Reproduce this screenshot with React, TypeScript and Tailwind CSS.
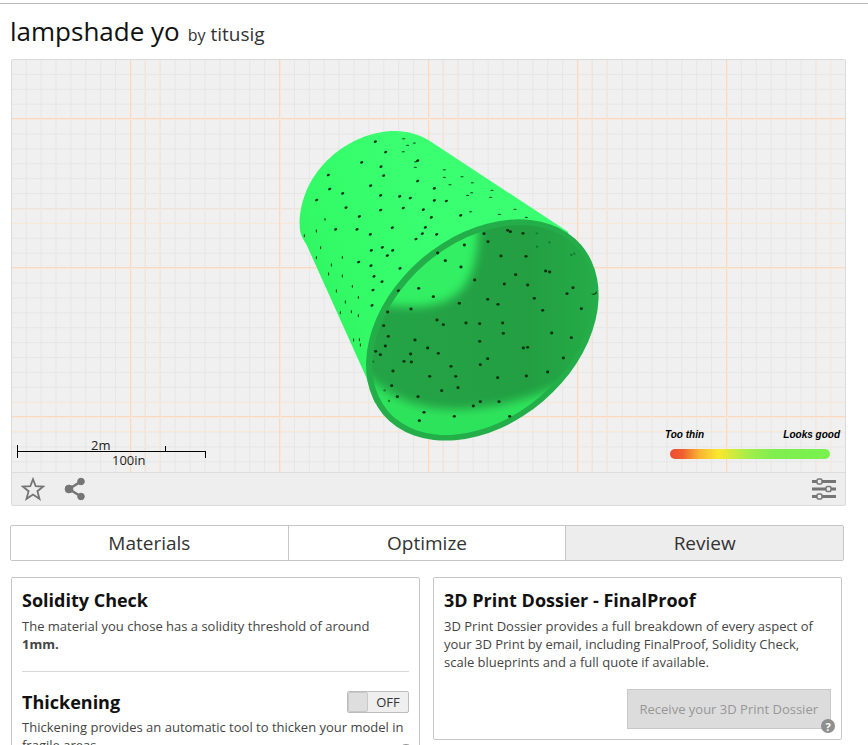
import { useState, type ReactNode } from 'react'

type TabKey = 'materials' | 'optimize' | 'review'

const TABS: { key: TabKey; label: string }[] = [
  { key: 'materials', label: 'Materials' },
  { key: 'optimize', label: 'Optimize' },
  { key: 'review', label: 'Review' },
]

type Point = [number, number]

// marks on the outer wall
const OUTER_MARKS: Point[] = [
  [271, 65], [302, 96], [230, 127], [288, 140], [296, 167], [130, 165], [134, 207], [173, 220],
  [257, 197], [287, 226], [344, 229], [376, 234], [355, 264], [95, 240], [183, 263], [223, 289],
  [287, 270], [322, 323], [152, 328], [216, 328], [256, 343], [259, 391], [292, 382], [323, 391],
  [307, 407], [398, 183], [398, 122], [415, 269], [439, 292], [421, 322], [412, 341], [393, 357],
  [455, 343], [448, 205], [448, 241], [484, 243], [221, 426], [258, 437], [267, 469], [291, 485],
  [345, 445], [264, 510], [261, 556], [340, 512], [527, 286],
]

// foreshortened marks along the top edge
const FLAT_MARKS: Point[] = [
  [356, 56], [368, 76], [388, 69], [355, 95], [391, 142], [392, 125], [478, 149], [478, 172],
  [495, 194], [531, 170], [562, 188], [560, 218], [548, 226], [621, 211], [617, 232], [557, 275],
  [643, 283], [690, 268], [724, 292],
]

// foreshortened marks along the left edge
const TALL_MARKS: Point[] = [
  [120, 298], [94, 333], [107, 383], [94, 413], [139, 435], [131, 462], [172, 412], [172, 468],
  [154, 513], [202, 499], [220, 532], [181, 546], [166, 578], [199, 575], [220, 587], [206, 660],
  [223, 659], [226, 675], [58, 347],
]

const INNER_MARKS: Point[] = [
  [597, 341], [609, 365], [538, 375], [458, 399], [481, 422], [528, 441], [569, 480], [401, 505],
  [445, 530], [378, 567], [523, 550], [456, 600], [475, 614], [648, 408], [723, 409], [692, 464],
  [658, 492], [728, 495], [748, 535], [608, 538], [639, 553], [773, 571], [782, 453], [794, 456],
  [864, 503], [846, 521], [889, 566], [543, 609], [584, 611], [653, 609], [655, 640], [584, 664],
  [800, 639], [859, 653], [715, 684], [728, 682], [608, 716], [586, 734], [835, 714], [788, 756],
  [724, 768], [638, 773], [498, 739], [512, 769], [519, 803], [470, 812], [434, 769], [460, 700],
  [428, 684], [390, 660], [377, 702], [357, 724], [379, 726], [308, 576], [296, 617], [310, 649],
  [301, 678], [272, 694], [286, 704], [324, 753], [320, 797], [337, 830], [399, 830], [417, 877],
  [403, 902], [508, 889], [565, 858], [586, 845], [642, 845], [674, 889], [668, 331], [676, 335],
  [714, 340],
]

const FAINT_MARKS: Point[] = [
  [755, 340], [793, 367], [756, 380], [859, 405], [868, 401], [299, 811], [312, 843], [265, 725],
]

function ModelScene() {
  return (
    <svg
      viewBox="0 0 833 412"
      preserveAspectRatio="xMidYMid slice"
      className="block h-full w-full"
      role="img"
      aria-label="lampshade yo"
    >
      <defs>
        <pattern id="minor" x="-31" y="-1" width="14.9" height="14.9" patternUnits="userSpaceOnUse">
          <path d="M.5 0V14.9M0 .5H14.9" stroke="#e6e6e6" fill="none" />
        </pattern>
        <pattern id="major" x="-31" y="58" width="149" height="149" patternUnits="userSpaceOnUse">
          <path d="M.5 0V149M0 .5H149" stroke="#f9dac0" fill="none" />
          <path d="M1.5 0V149M0 1.5H149" stroke="#f8e8dc" fill="none" />
        </pattern>
        <linearGradient id="wall" x1="0" y1="0.6" x2="0.5" y2="0.35">
          <stop offset="0" stopColor="#2ff25f" />
          <stop offset="0.4" stopColor="#33fb67" />
          <stop offset="1" stopColor="#3aff71" />
        </linearGradient>
        <linearGradient id="inside" x1="0" y1="0" x2="1" y2="0">
          <stop offset="0" stopColor="#24a446" />
          <stop offset="0.7" stopColor="#239f42" />
          <stop offset="1" stopColor="#25ad48" />
        </linearGradient>
        <clipPath id="opening">
          <ellipse cx="594" cy="630" rx="375" ry="263" transform="rotate(-40.5 594 630)" />
        </clipPath>
        <filter id="soft" x="-20%" y="-20%" width="140%" height="140%">
          <feGaussianBlur stdDeviation="14" />
        </filter>
      </defs>

      <rect width="833" height="412" fill="#f0f0f0" />
      <rect width="833" height="412" fill="url(#minor)" />
      <path
        d="M132.500 0V412M147.500 0V412M430.500 0V412M445.500 0V412M579.500 0V412M594.500 0V412M804.500 0V412M818.500 0V412M0 149.500H833M0 163.500H833M0 342.500H833M0 371.500H833"
        stroke="#f8e8d8"
      />
      <rect width="833" height="412" fill="url(#major)" />

      <g transform="translate(273 60) scale(.33333)">
        <path
          d="M44 315C44 150 195 33 330 33C370 33 405 45 430 60L850 336L600 900L270 850L243 770L65 375C50 350 44 340 44 315Z"
          fill="url(#wall)"
        />
        <ellipse cx="592" cy="630" rx="391" ry="281" transform="rotate(-40.5 592 630)" fill="#24ae49" />
        <g clipPath="url(#opening)">
          <rect x="240" y="290" width="710" height="680" fill="url(#inside)" />
          <path
            d="M220 740C290 815 370 865 500 868C640 868 740 830 830 795L1000 760L900 1000L220 1000Z"
            fill="#2fe35c"
            filter="url(#soft)"
          />
          <path
            d="M200 548C330 556 400 570 460 550C555 525 587 430 579 270L200 270Z"
            fill="#33ef63"
            filter="url(#soft)"
          />
        </g>
        <g fill="#07300f">
          {OUTER_MARKS.map(([x, y]) => (
            <ellipse key={`${x}-${y}`} cx={x} cy={y} rx="5" ry="3.500" transform={`rotate(-25 ${x} ${y})`} />
          ))}
          {FLAT_MARKS.map(([x, y]) => (
            <ellipse key={`${x}-${y}`} cx={x} cy={y} rx="5" ry="1.500" />
          ))}
          {TALL_MARKS.map(([x, y]) => (
            <ellipse key={`${x}-${y}`} cx={x} cy={y} rx="1.600" ry="5" />
          ))}
          {INNER_MARKS.map(([x, y]) => (
            <ellipse key={`${x}-${y}`} cx={x} cy={y} rx="4.800" ry="4.200" />
          ))}
          <path d="M918 521H928L936 513L934 521L926 525Z" />
        </g>
        <g fill="#147a30">
          {FAINT_MARKS.map(([x, y]) => (
            <circle key={`${x}-${y}`} cx={x} cy={y} r="3.500" />
          ))}
        </g>
      </g>
    </svg>
  )
}

function ScaleRuler() {
  return (
    <div className="absolute bottom-1 left-1 w-48 text-[13px] leading-4 text-[#222]">
      <div className="pl-[75px]">2m</div>
      <svg viewBox="0 0 192 13" className="-mt-2 -mb-[6px] block h-[13px] w-full" aria-hidden="true">
        <path d="M1.500 0V13M1 6.500H190M149.500 1V6M189.500 6V13" stroke="#000" fill="none" />
      </svg>
      <div className="pl-24">100in</div>
    </div>
  )
}

function ThicknessLegend() {
  return (
    <div className="absolute right-[5px] bottom-[13px] w-[175px] font-['Liberation_Sans',Arial,sans-serif] text-[10px] leading-4 font-bold text-black italic">
      <div className="flex justify-between">
        <span>Too thin</span>
        <span>Looks good</span>
      </div>
      <div className="mt-[6px] mr-[10px] ml-[5px] h-[10px] rounded-full bg-[linear-gradient(90deg,#ee4b31_0%,#f0602f_8%,#f8b233_18%,#fbe72e_30%,#a0ee4c_50%,#80ee50_65%,#78f24e_100%)]" />
    </div>
  )
}

function StarIcon() {
  return (
    <svg width="24" height="24" viewBox="0 0 24 24" fill="none" stroke="#757575" strokeWidth="1.800" aria-hidden="true">
      <path d="M12 2.200L14.700 9.200L22.300 9.500L16.400 14.200L18.500 21.800L12 17.500L5.500 21.800L7.600 14.200L1.700 9.500L9.300 9.200Z" />
    </svg>
  )
}

function ShareIcon() {
  return (
    <svg width="24" height="24" viewBox="0 0 24 24" fill="#757575" stroke="#757575" aria-hidden="true">
      <path d="M18 4.500L6 12L18 19.500" fill="none" strokeWidth="2.500" />
      <circle cx="18" cy="4.500" r="3.300" />
      <circle cx="6" cy="12" r="3.900" />
      <circle cx="18" cy="19.500" r="3.300" />
    </svg>
  )
}

function SlidersIcon() {
  return (
    <svg width="24" height="24" viewBox="0 0 24 24" aria-hidden="true">
      <path d="M0 4.500H24M0 12H24M0 19.500H24" stroke="#757575" strokeWidth="3" />
      <g fill="#eee" stroke="#757575" strokeWidth="1.500">
        <rect x="5" y="2" width="5" height="5" rx="1.500" />
        <rect x="14" y="9.500" width="5" height="5" rx="1.500" />
        <rect x="5" y="17" width="5" height="5" rx="1.500" />
      </g>
    </svg>
  )
}

function HelpButton({ label }: { label: string }) {
  return (
    <button
      type="button"
      aria-label={label}
      className="absolute -right-1 -bottom-1 flex size-[14px] items-center justify-center rounded-full bg-[#8e8e8e] text-[11px] leading-none font-bold text-white"
    >
      ?
    </button>
  )
}

function Card({ children }: { children: ReactNode }) {
  return (
    <div className="flex-1 rounded-xs border border-[#c6c6c6] px-[10px] pt-[7px] pb-[10px]">{children}</div>
  )
}

export default function App() {
  const [tab, setTab] = useState<TabKey>('review')
  const [thickening, setThickening] = useState(false)

  return (
    <div className="bg-white pt-[3px] font-['Open_Sans','Noto_Sans',sans-serif] text-[#444]">
      <div className="border-t border-[#bbb] pt-[9px] pr-[22px] pl-[10px]">
        <h1 className="flex items-baseline text-[26px] leading-9 text-[#111]">
          lampshade yo
          <span className="ml-2 text-base text-[#333]">by</span>
          <a href="#titusig" className="ml-[5px] text-[19px] text-[#333]">
            titusig
          </a>
        </h1>

        {/* viewer */}
        <div className="mt-[7px] ml-px rounded-xs border border-[#dadada] bg-[#eee]">
          <div className="relative h-[412px] overflow-hidden">
            <ModelScene />
            <ScaleRuler />
            <ThicknessLegend />
          </div>
          <div className="flex h-[33px] items-center border-t border-[#ddd] px-[9px]">
            <button type="button" aria-label="Favourite">
              <StarIcon />
            </button>
            <button type="button" aria-label="Share" className="ml-[18px]">
              <ShareIcon />
            </button>
            <button type="button" aria-label="View settings" className="ml-auto">
              <SlidersIcon />
            </button>
          </div>
        </div>

        {/* tabs */}
        <div
          role="tablist"
          className="mt-[19px] mr-[2px] flex divide-x divide-[#c6c6c6] overflow-hidden rounded-xs border border-[#c6c6c6]"
        >
          {TABS.map((t) => (
            <button
              key={t.key}
              type="button"
              role="tab"
              aria-selected={tab === t.key}
              onClick={() => setTab(t.key)}
              className={
                'h-[34px] flex-1 text-[19px] leading-[34px] text-[#333] ' + (tab === t.key ? 'bg-[#ededed]' : 'bg-white')
              }
            >
              {t.label}
            </button>
          ))}
        </div>

        <div className="mt-4 mr-1 ml-px flex items-start gap-[13px] text-[13px] leading-[18px]">
          <Card>
            <h2 className="text-lg leading-[30px] font-bold text-[#111]">Solidity Check</h2>
            <p className="mt-[2px]">
              The material you chose has a solidity threshold of around <strong>1mm.</strong>
            </p>
            <hr className="mt-[18px] border-[#d8d8d8]" />
            <div className="mt-[15px] flex items-center justify-between">
              <h2 className="text-lg leading-[30px] font-bold text-[#111]">Thickening</h2>
              <label className="flex h-[22px] w-[62px] cursor-pointer items-center rounded-xs border border-[#bdbdbd] bg-[#efefef] text-[#333]">
                <input
                  type="checkbox"
                  className="sr-only"
                  aria-label="Thickening"
                  checked={thickening}
                  onChange={(e) => setThickening(e.target.checked)}
                />
                <span
                  className={
                    'h-5 w-5 rounded-xs border border-[#c8c8c8] bg-[#dedede] ' + (thickening ? 'order-2' : '')
                  }
                />
                <span className="flex-1 text-center">{thickening ? 'ON' : 'OFF'}</span>
              </label>
            </div>
            <div className="relative mt-px">
              <p>Thickening provides an automatic tool to thicken your model in fragile areas.</p>
              <HelpButton label="About thickening" />
            </div>
          </Card>

          <Card>
            <h2 className="text-lg leading-[30px] font-bold text-[#111]">3D Print Dossier - FinalProof</h2>
            <p className="mt-[2px]">
              3D Print Dossier provides a full breakdown of every aspect of your 3D Print by email, including
              FinalProof, Solidity Check, scale blueprints and a full quote if available.
            </p>
            <div className="relative mt-[18px] ml-auto w-fit">
              <button
                type="button"
                disabled
                className="h-10 border border-[#c8c8c8] bg-[#dcdcdc] px-3 text-[#979797]"
              >
                Receive your 3D Print Dossier
              </button>
              <HelpButton label="About the dossier" />
            </div>
          </Card>
        </div>
      </div>
    </div>
  )
}
